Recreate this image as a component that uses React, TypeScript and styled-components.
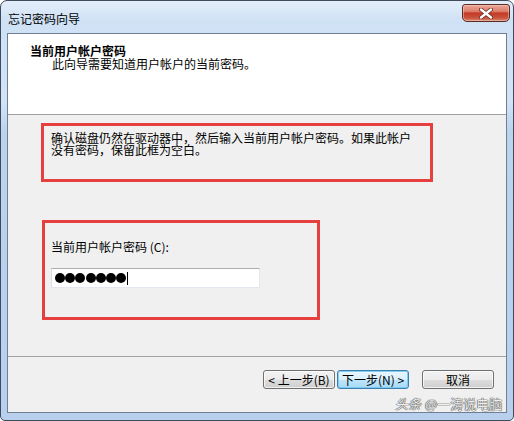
import React from "react";
import styled, { createGlobalStyle } from "styled-components";

const Global = createGlobalStyle`
  html, body { margin: 0; padding: 0; background: #ffffff; }
  body { font-family: "Noto Sans CJK SC", "Liberation Sans", sans-serif; }
`;

const FONT = `"Noto Sans CJK SC", "Liberation Sans", sans-serif`;

const Window = styled.div`
  position: relative;
  box-sizing: border-box;
  width: 514px;
  height: 421px;
  border: 1px solid #3d4b5c;
  border-radius: 7px 7px 5px 5px;
  padding: 0 6px 7px 6px;
  display: flex;
  flex-direction: column;
  background: linear-gradient(
    180deg,
    #e4eefa 0px,
    #cfe1f5 20px,
    #d2e3f6 100px,
    #bcd3ef 130px,
    #b8d0ee 100%
  );
  overflow: hidden;
  font-family: ${FONT};
`;

const TitleBar = styled.div`
  height: 32px;
  display: flex;
  align-items: flex-start;
  justify-content: space-between;
`;

const TitleText = styled.div`
  padding: 11px 0 0 1px;
  font-size: 12px;
  line-height: 14px;
  color: #000;
`;

const CloseButton = styled.div`
  margin-top: 3px;
  margin-right: -3px;
  width: 48px;
  height: 18px;
  box-sizing: border-box;
  border: 1px solid #5b2a24;
  border-radius: 3px 3px 5px 5px;
  background: linear-gradient(
    180deg,
    #eba597 0%,
    #dc7f6c 40%,
    #c43a24 50%,
    #c8533c 80%,
    #d98a72 100%
  );
  box-shadow: inset 0 0 0 1px rgba(255, 220, 210, 0.45);
  display: flex;
  align-items: center;
  justify-content: center;
`;

const Client = styled.div`
  flex: 1;
  display: flex;
  flex-direction: column;
  border: 1px solid #6f7e90;
  background: #f0f0f0;
`;

const Header = styled.div`
  height: 81px;
  box-sizing: border-box;
  background: #ffffff;
  border-bottom: 1px solid #a0a0a0;
  padding: 10px 0 0 22px;
  color: #000;
  display: flex;
  flex-direction: column;
  align-items: flex-start;
`;

const HeaderTitle = styled.div`
  font-size: 12px;
  line-height: 13px;
  font-weight: 700;
`;

const HeaderSub = styled.div`
  font-size: 12px;
  line-height: 13px;
  padding-left: 22px;
`;

const Body = styled.div`
  flex: 1;
  padding: 8px 0 0 33px;
  display: flex;
  flex-direction: column;
  align-items: flex-start;
`;

const RedBox = styled.div<{ $w: number; $h: number; $mt?: number; $ml?: number }>`
  box-sizing: border-box;
  width: ${(p) => p.$w}px;
  height: ${(p) => p.$h}px;
  margin-top: ${(p) => p.$mt ?? 0}px;
  margin-left: ${(p) => p.$ml ?? 0}px;
  border: 3px solid #e5403f;
`;

const Para = styled.div`
  width: 364px;
  padding: 6px 0 0 7px;
  font-size: 12px;
  line-height: 12px;
  color: #000;
`;

const FieldGroup = styled.div`
  padding: 17px 0 0 6px;
  display: flex;
  flex-direction: column;
  align-items: flex-start;
`;

const Label = styled.div`
  font-size: 12px;
  line-height: 14px;
  color: #000;
`;

const PasswordBox = styled.div`
  margin-top: 14px;
  width: 209px;
  height: 20px;
  box-sizing: border-box;
  background: #fff;
  border: 1px solid #e2e8ee;
  border-top-color: #abadb3;
  border-left-color: #dbdfe6;
  display: flex;
  align-items: center;
  padding-left: 3px;
`;

const Dot = styled.span`
  width: 10px;
  height: 10px;
  border-radius: 50%;
  background: #000;
  margin-right: 0.2px;
`;

const Caret = styled.span`
  width: 1px;
  height: 13px;
  background: #000;
  margin-left: 1px;
`;

const Footer = styled.div`
  height: 42px;
  border-top: 1px solid #a0a0a0;
  display: flex;
  align-items: flex-start;
  justify-content: flex-end;
  padding: 13px 12px 0 0;
  box-sizing: content-box;
`;

const Button = styled.div<{ $default?: boolean; $gap?: number }>`
  width: 72px;
  height: 19px;
  box-sizing: border-box;
  margin-left: ${(p) => p.$gap ?? 0}px;
  border: 1px solid ${(p) => (p.$default ? "#3c7fb1" : "#707070")};
  border-radius: 3px;
  background: ${(p) =>
    p.$default
      ? "linear-gradient(180deg, #eaf6fd 0%, #d9f0fc 50%, #bee6fd 51%, #a7d9f5 100%)"
      : "linear-gradient(180deg, #f2f2f2 0%, #ebebeb 50%, #dddddd 51%, #cfcfcf 100%)"};
  box-shadow: inset 0 0 0 1px
    ${(p) => (p.$default ? "rgba(120, 200, 240, 0.9)" : "rgba(255, 255, 255, 0.7)")};
  font-size: 12px;
  line-height: 17px;
  color: #000;
  text-align: center;
  white-space: nowrap;
`;

const Watermark = styled.div`
  position: absolute;
  left: 394px;
  top: 395px;
  font-size: 13px;
  line-height: 16px;
  color: rgba(255, 255, 255, 0.92);
  text-shadow: 0 0 1px #4a4a4a, 0 0 1px #4a4a4a, 0 0 1px #4a4a4a;
  white-space: nowrap;
`;

const Italic = styled.span`
  font-style: italic;
  margin-right: 4px;
`;

export default function App() {
  return (
    <>
      <Global />
      <Window>
        <TitleBar>
          <TitleText>忘记密码向导</TitleText>
          <CloseButton>
            <svg width="14" height="11" viewBox="0 0 14 11">
              <path
                d="M2 1.5 L12 9.5 M12 1.5 L2 9.5"
                stroke="#6a2a20"
                strokeWidth="4"
                strokeLinecap="round"
              />
              <path
                d="M2 1.5 L12 9.5 M12 1.5 L2 9.5"
                stroke="#ffffff"
                strokeWidth="2.4"
                strokeLinecap="round"
              />
            </svg>
          </CloseButton>
        </TitleBar>
        <Client>
          <Header>
            <HeaderTitle>当前用户帐户密码</HeaderTitle>
            <HeaderSub>此向导需要知道用户帐户的当前密码。</HeaderSub>
          </Header>
          <Body>
            <RedBox $w={392} $h={59}>
              <Para>
                确认磁盘仍然在驱动器中，然后输入当前用户帐户密码。如果此帐户没有密码，保留此框为空白。
              </Para>
            </RedBox>
            <RedBox $w={278} $h={100} $mt={38} $ml={1}>
              <FieldGroup>
                <Label>当前用户帐户密码 (C):</Label>
                <PasswordBox>
                  {Array.from({ length: 7 }).map((_, i) => (
                    <Dot key={i} />
                  ))}
                  <Caret />
                </PasswordBox>
              </FieldGroup>
            </RedBox>
          </Body>
          <Footer>
            <Button>&lt; 上一步(B)</Button>
            <Button $default $gap={2}>
              下一步(N) &gt;
            </Button>
            <Button $gap={13}>取消</Button>
          </Footer>
        </Client>
        <Watermark>
          <Italic>头条</Italic>@一涛说电脑
        </Watermark>
      </Window>
    </>
  );
}
